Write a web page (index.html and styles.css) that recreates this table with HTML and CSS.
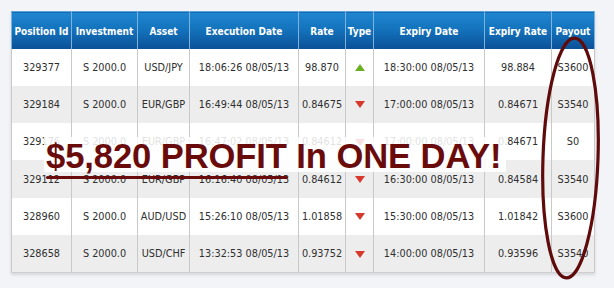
FILE: index.html
```html
<!DOCTYPE html>
<html>
<head>
<meta charset="utf-8">
<link rel="stylesheet" href="styles.css">
</head>
<body>
<div class="page">
  <table class="trades">
    <colgroup>
      <col class="c1"><col class="c2"><col class="c3"><col class="c4"><col class="c5"><col class="c6"><col class="c7"><col class="c8"><col class="c9">
    </colgroup>
    <thead>
      <tr><th>Position Id</th><th>Investment</th><th>Asset</th><th>Execution Date</th><th>Rate</th><th>Type</th><th>Expiry Date</th><th>Expiry Rate</th><th>Payout</th></tr>
    </thead>
    <tbody>
      <tr><td>329377</td><td>S 2000.0</td><td>USD/JPY</td><td>18:06:26 08/05/13</td><td>98.870</td><td><span class="up"></span></td><td>18:30:00 08/05/13</td><td>98.884</td><td>S3600</td></tr>
      <tr><td>329184</td><td>S 2000.0</td><td>EUR/GBP</td><td>16:49:44 08/05/13</td><td>0.84675</td><td><span class="down"></span></td><td>17:00:00 08/05/13</td><td>0.84671</td><td>S3540</td></tr>
      <tr><td>329176</td><td>S 2000.0</td><td>EUR/GBP</td><td>16:47:02 08/05/13</td><td>0.84612</td><td><span class="down"></span></td><td>17:00:00 08/05/13</td><td>0.84671</td><td>S0</td></tr>
      <tr><td>329112</td><td>S 2000.0</td><td>EUR/GBP</td><td>16:16:40 08/05/13</td><td>0.84612</td><td><span class="down"></span></td><td>16:30:00 08/05/13</td><td>0.84584</td><td>S3540</td></tr>
      <tr><td>328960</td><td>S 2000.0</td><td>AUD/USD</td><td>15:26:10 08/05/13</td><td>1.01858</td><td><span class="down"></span></td><td>15:30:00 08/05/13</td><td>1.01842</td><td>S3600</td></tr>
      <tr><td>328658</td><td>S 2000.0</td><td>USD/CHF</td><td>13:32:53 08/05/13</td><td>0.93752</td><td><span class="down"></span></td><td>14:00:00 08/05/13</td><td>0.93596</td><td>S3540</td></tr>
    </tbody>
  </table>
  <div class="band"></div>
  <div class="headline">$5,820 PROFIT In ONE DAY!</div>
  <div class="underline"></div>
  <svg class="circle" width="614" height="288" viewBox="0 0 614 288">
    <ellipse cx="570.5" cy="158" rx="27.5" ry="120" transform="rotate(2 570.5 158)" fill="none" stroke="#600b0b" stroke-width="3.2"/>
  </svg>
</div>
</body>
</html>
```

FILE: styles.css
```css
html, body {
  margin: 0;
  padding: 0;
  background: #f3f4f8;
}
.page {
  position: relative;
  width: 614px;
  height: 288px;
  padding: 11px 0 0 11px;
  box-sizing: border-box;
}
.trades {
  border-collapse: collapse;
  table-layout: fixed;
  width: 583px;
  font-family: "DejaVu Sans Condensed", "DejaVu Sans", "Liberation Sans", sans-serif;
  font-stretch: condensed;
  box-shadow: 0 2px 3px rgba(0,0,0,0.12);
}
.c1 { width: 60px; }
.c2 { width: 66px; }
.c3 { width: 52px; }
.c4 { width: 109px; }
.c5 { width: 47px; }
.c6 { width: 28px; }
.c7 { width: 111px; }
.c8 { width: 67px; }
.c9 { width: 43px; }
.trades th {
  height: 37px;
  padding: 2px 0 0 0;
  box-sizing: border-box;
  color: #fff;
  font-size: 10px;
  font-weight: bold;
  text-align: center;
  white-space: nowrap;
  overflow: hidden;
  background: linear-gradient(#1f86d0 0%, #1473bd 45%, #0a5096 100%);
  border-left: 1px solid #7fb1dd;
  border-right: 1px solid #7fb1dd;
  border-top: 1px solid #5ea3dc;
}
.trades td {
  height: 37.3px;
  padding: 0;
  color: #2f2f2f;
  font-size: 10.8px;
  text-align: center;
  white-space: nowrap;
  border-left: 1px solid #c9c9c9;
  border-right: 1px solid #c9c9c9;
}
.trades tbody tr:nth-child(odd) td { background: #ffffff; }
.trades tbody tr:nth-child(even) td { background: #ededed; }
.trades tbody tr:last-child td { border-bottom: 1px solid #cfcfcf; }
.up {
  display: inline-block;
  width: 0;
  height: 0;
  border-left: 5px solid transparent;
  border-right: 5px solid transparent;
  border-bottom: 7px solid #6cae22;
  vertical-align: middle;
}
.down {
  display: inline-block;
  width: 0;
  height: 0;
  border-left: 5px solid transparent;
  border-right: 5px solid transparent;
  border-top: 7px solid #d8372b;
  vertical-align: middle;
}
.band {
  position: absolute;
  left: 44px;
  top: 137px;
  width: 462px;
  height: 35px;
  background: rgba(255,255,255,0.85);
}
.headline {
  position: absolute;
  left: 46px;
  top: 138.5px;
  font-family: "Liberation Sans", Arial, sans-serif;
  font-weight: bold;
  font-size: 34.6px;
  line-height: 35px;
  letter-spacing: -0.1px;
  color: #6a0b0b;
  white-space: nowrap;
}
.underline {
  position: absolute;
  left: 46px;
  top: 176px;
  width: 242px;
  height: 3px;
  border-radius: 2px;
  background: #6a0b0b;
}
.circle {
  position: absolute;
  left: 0;
  top: 0;
}
```
